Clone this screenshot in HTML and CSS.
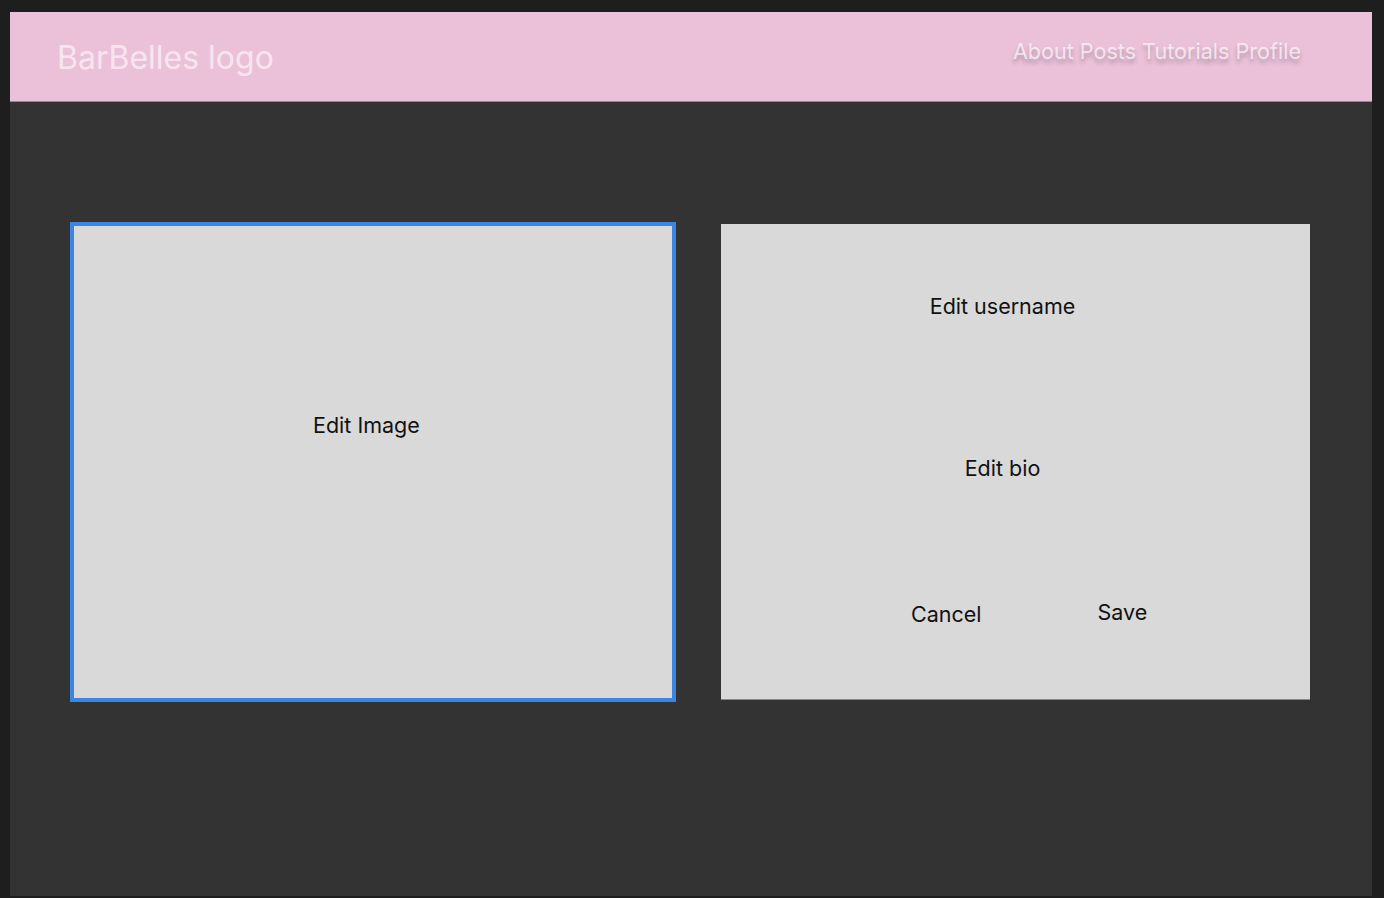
FILE: index.html
```html
<!DOCTYPE html>
<html lang="en">
<head>
<meta charset="utf-8">
<title>BarBelles - Edit Profile</title>
<link rel="stylesheet" href="styles.css">
</head>
<body>
<div class="frame">
  <header class="topbar">
    <div class="logo">BarBelles logo</div>
    <nav class="nav">
      <a href="#">About</a>
      <a href="#">Posts</a>
      <a href="#">Tutorials</a>
      <a href="#">Profile</a>
    </nav>
  </header>
  <main class="content">
    <section class="image-card">
      <span class="label">Edit Image</span>
    </section>
    <section class="form-card">
      <div class="field username">Edit username</div>
      <div class="field bio">Edit bio</div>
      <div class="actions">
        <span class="btn cancel">Cancel</span>
        <span class="btn save">Save</span>
      </div>
    </section>
  </main>
</div>
</body>
</html>
```

FILE: styles.css
```css
* { box-sizing: border-box; }

html, body {
  margin: 0;
  padding: 0;
  background: #1e1e1e;
  width: 1384px;
  height: 898px;
  overflow: hidden;
}

body {
  font-family: Inter, "Noto Sans", sans-serif;
  padding: 12px 12px 0 10px;
}

.frame {
  width: 1362px;
  height: 884px;
  background: #333333;
  display: flex;
  flex-direction: column;
}

.topbar {
  height: 90px;
  background: #ebc1da;
  border-bottom: 1px solid #9a8592;
  display: flex;
  justify-content: space-between;
  align-items: flex-start;
  padding: 0 71px 0 47px;
}

.logo {
  margin-top: 27px;
  font-size: 32px;
  line-height: 38px;
  color: rgba(255, 255, 255, 0.62);
}

.nav {
  margin-top: 26px;
  display: flex;
  gap: 6px;
}

.nav a {
  font-size: 21.6px;
  line-height: 26px;
  color: rgba(255, 255, 255, 0.68);
  text-decoration: none;
  text-shadow: 0 4px 4px rgba(0, 0, 0, 0.25);
}

.content {
  display: flex;
  align-items: flex-start;
  padding: 120px 0 0 60px;
  gap: 45px;
}

.image-card {
  width: 606px;
  height: 480px;
  background: #d9d9d9;
  border: 4px solid #3b86e0;
  padding: 186px 0 0 239px;
}

.label,
.field,
.btn {
  font-size: 21.5px;
  line-height: 26px;
  color: #111111;
}

.form-card {
  margin-top: 2px;
  width: 589px;
  height: 476px;
  background: #d9d9d9;
  border-bottom: 1px solid #8a8a8a;
  display: flex;
  flex-direction: column;
  padding: 69px 26px 0 0;
  text-align: center;
}

.bio {
  margin-top: 136px;
}

.actions {
  margin-top: 118px;
  display: flex;
  align-items: flex-start;
  padding-left: 190px;
  gap: 116px;
}

.cancel {
  margin-top: 2px;
}
```
